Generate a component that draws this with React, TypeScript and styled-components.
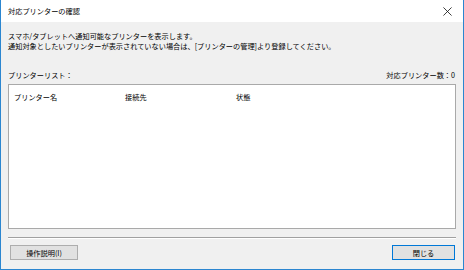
import * as React from "react";
import styled, { createGlobalStyle } from "styled-components";

const Global = createGlobalStyle`
  html, body { margin: 0; padding: 0; background: #ffffff; }
  body {
    font-family: "Noto Sans CJK JP", "Noto Sans", sans-serif;
    font-size: 7.2px;
    color: #000000;
  }
`;

const Window = styled.div`
  width: 464px;
  height: 270px;
  box-sizing: border-box;
  border: 1px solid #2b86d0;
  border-top: none;
  background: #f0f0f0;
  display: flex;
  flex-direction: column;
`;

const TitleBar = styled.div`
  height: 22px;
  flex: none;
  background: #ffffff;
  display: flex;
  align-items: center;
  justify-content: space-between;
  padding: 0 11px 0 7px;
`;

const Title = styled.span`
  font-size: 7.2px;
  line-height: 10px;
`;

const CloseIcon = styled.svg`
  width: 9px;
  height: 9px;
  display: block;
`;

const Body = styled.div`
  flex: 1;
  display: flex;
  flex-direction: column;
  padding: 9px 7px 0 7px;
`;

const Message = styled.p`
  margin: 0;
  line-height: 10px;
`;

const ListHeader = styled.div`
  margin-top: 19px;
  display: flex;
  justify-content: space-between;
  line-height: 10px;
  padding-right: 1px;
`;

const ListBox = styled.div`
  margin-top: 4px;
  height: 145px;
  box-sizing: border-box;
  background: #ffffff;
  border: 1px solid #a9a9a9;
`;

const HeaderRow = styled.div`
  display: grid;
  grid-template-columns: 111px 111px 1fr;
  height: 20px;
  align-items: center;
  padding: 2px 0 0 5px;
  line-height: 10px;
`;

const Divider = styled.div`
  margin-top: 8px;
  height: 1px;
  background: #a0a0a0;
  border-bottom: 1px solid #ffffff;
`;

const Footer = styled.div`
  margin-top: 6px;
  display: flex;
  justify-content: space-between;
  padding: 0 1px 0 2px;
`;

const Button = styled.button<{ $primary?: boolean; $w: number }>`
  width: ${(p) => p.$w}px;
  height: 15px;
  box-sizing: border-box;
  padding: 0;
  margin: 0;
  background: #e1e1e1;
  border: 1px solid ${(p) => (p.$primary ? "#0078d7" : "#adadad")};
  font-family: inherit;
  font-size: 7.2px;
  line-height: 10px;
  color: #000000;
  display: flex;
  align-items: center;
  justify-content: center;
`;

export default function App() {
  return (
    <>
      <Global />
      <Window>
        <TitleBar>
          <Title>対応プリンターの確認</Title>
          <CloseIcon viewBox="0 0 10 10">
            <path d="M0.5 0.5 L9.5 9.5 M9.5 0.5 L0.5 9.5" stroke="#111" strokeWidth="0.9" fill="none" />
          </CloseIcon>
        </TitleBar>
        <Body>
          <Message>
            スマホ/タブレットへ通知可能なプリンターを表示します。
            <br />
            通知対象としたいプリンターが表示されていない場合は、[プリンターの管理]より登録してください。
          </Message>
          <ListHeader>
            <span>プリンターリスト：</span>
            <span>対応プリンター数：0</span>
          </ListHeader>
          <ListBox>
            <HeaderRow>
              <span>プリンター名</span>
              <span>接続先</span>
              <span>状態</span>
            </HeaderRow>
          </ListBox>
          <Divider />
          <Footer>
            <Button $w={68}>操作説明(I)</Button>
            <Button $w={63} $primary>
              閉じる
            </Button>
          </Footer>
        </Body>
      </Window>
    </>
  );
}
